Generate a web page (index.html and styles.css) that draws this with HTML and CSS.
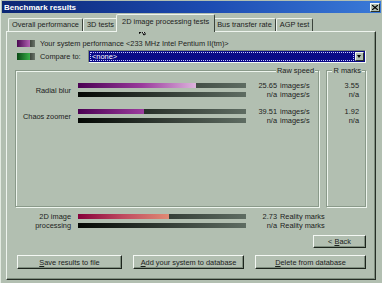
FILE: index.html
```html
<!DOCTYPE html>
<html lang="en">
<head>
  <meta charset="UTF-8" />
  <title>Benchmark results</title>
  <link rel="stylesheet" href="styles.css">
</head>
<body>
  <div class="window">
    <div class="titlebar">
      <span class="title">Benchmark results</span>
      <span class="close">
        <svg width="6" height="5" viewBox="0 0 6 5"><path d="M0 0 L6 5 M6 0 L0 5" stroke="#000" stroke-width="1.2"/></svg>
      </span>
    </div>

    <div class="tabs">
      <div class="tab">Overall performance</div>
      <div class="tab">3D tests</div>
      <div class="tab active">2D image processing tests</div>
      <div class="tab">Bus transfer rate</div>
      <div class="tab">AGP test</div>
    </div>

    <div class="panel">
      <div class="legend-row">
        <span class="swatch swatch-mine"></span>
        Your system performance &lt;233 MHz Intel Pentium II(tm)&gt;
      </div>
      <div class="legend-row">
        <span class="swatch swatch-compare"></span>
        <span class="compare-label">Compare to:</span>
        <div class="select">
          <span class="select-value">&lt;none&gt;</span>
          <span class="select-arrow"></span>
        </div>
      </div>

      <div class="groups">
        <fieldset class="group group-raw">
          <legend>Raw speed</legend>
          <div class="result">
            <div class="result-label">Radial blur</div>
            <div class="bar"><div class="fill fill-purple" style="width:70%"></div></div>
            <span class="num">25.65</span><span class="unit">images/s</span>
            <div class="bar"></div>
            <span class="num">n/a</span><span class="unit">images/s</span>
          </div>
          <div class="result">
            <div class="result-label">Chaos zoomer</div>
            <div class="bar"><div class="fill fill-purple" style="width:39%"></div></div>
            <span class="num">39.51</span><span class="unit">images/s</span>
            <div class="bar"></div>
            <span class="num">n/a</span><span class="unit">images/s</span>
          </div>
        </fieldset>
        <fieldset class="group group-marks">
          <legend>R marks</legend>
          <div class="marks"><span>3.55</span><span>n/a</span></div>
          <div class="marks"><span>1.92</span><span>n/a</span></div>
        </fieldset>
      </div>

      <div class="result result-total">
        <div class="result-label">2D image<br>processing</div>
        <div class="bar"><div class="fill fill-red" style="width:54%"></div></div>
        <span class="num">2.73</span><span class="unit">Reality marks</span>
        <div class="bar"></div>
        <span class="num">n/a</span><span class="unit">Reality marks</span>
      </div>

      <div class="back-row">
        <button class="btn btn-back">&lt; <u>B</u>ack</button>
      </div>

      <div class="button-row">
        <button class="btn btn-save"><u>S</u>ave results to file</button>
        <button class="btn btn-wide"><u>A</u>dd your system to database</button>
        <button class="btn btn-wide"><u>D</u>elete from database</button>
      </div>
    </div>

    <svg class="cursor" width="10" height="13" viewBox="0 0 10 13">
      <path d="M0.5 0.5 L0.5 10.5 L3 8.2 L4.8 12 L6.4 11.3 L4.7 7.6 L8 7.6 Z" fill="#fff" stroke="#000" stroke-width="1"/>
    </svg>
  </div>
</body>
</html>
```

FILE: styles.css
```css
* {
  box-sizing: border-box;
}

body {
  margin: 0;
  font-family: "Liberation Sans", Arial, sans-serif;
  font-size: 7.4px;
  color: #1c221c;
  background-color: #b2bfb1;
}

.window {
  position: relative;
  width: 382px;
  height: 283px;
  background-color: #b2bfb1;
  border-left: 1px solid #e2eae1;
  overflow: hidden;
}

.titlebar {
  height: 12px;
  margin: 1px 1px 0 1px;
  padding: 0 1px 0 2px;
  display: flex;
  align-items: center;
  justify-content: space-between;
  background: linear-gradient(90deg, #0b2674, #1d4cb2 55%, #3a7ad8);
}

.title {
  color: #fff;
  font-weight: bold;
  font-size: 8px;
}

.close {
  width: 10px;
  height: 9px;
  display: flex;
  align-items: center;
  justify-content: center;
  background-color: #b2bfb1;
  border: 1px solid;
  border-color: #f4f8f4 #2a322a #2a322a #f4f8f4;
}

/* tabs */
.tabs {
  height: 18px;
  padding-left: 7px;
  display: flex;
  align-items: flex-end;
}

.tab {
  height: 13px;
  padding: 0 3px;
  line-height: 12px;
  white-space: nowrap;
  border: 1px solid;
  border-bottom: none;
  border-color: #eef4ee #3c443c transparent #eef4ee;
  border-radius: 2px 2px 0 0;
}

.tab.active {
  position: relative;
  z-index: 1;
  height: 18px;
  margin: 0 -2px -1px;
  padding: 0 5px;
  line-height: 13px;
  background-color: #b2bfb1;
}

/* panel */
.panel {
  width: 370px;
  height: 249px;
  margin-left: 5px;
  padding: 5px 9px 0 10px;
  border: 1px solid;
  border-color: #eef4ee #262e26 #262e26 #eef4ee;
  box-shadow: inset -1px -1px 0 #7f8e7f;
}

.legend-row {
  display: flex;
  align-items: center;
  height: 12px;
  white-space: nowrap;
}

.legend-row + .legend-row {
  height: 15px;
}

.swatch {
  width: 18px;
  height: 7px;
  margin-right: 5px;
  flex: none;
}

.swatch-mine {
  background: linear-gradient(90deg, #4a0a52, #b262b2 72%, #3e463e 72%, #6a746a);
}

.swatch-compare {
  background: linear-gradient(90deg, #0a4a16, #38b048 72%, #3e463e 72%, #6a746a);
}

.compare-label {
  width: 48px;
}

.select {
  flex: 1;
  height: 13px;
  padding: 1px;
  display: flex;
  align-items: center;
  background-color: #0a0a86;
  border: 1px solid;
  border-color: #7a887a #f4f8f4 #f4f8f4 #7a887a;
}

.select-value {
  flex: 1;
  height: 9px;
  line-height: 8px;
  padding-left: 1px;
  color: #fff;
  border: 1px dotted #c8c8ff;
}

.select-arrow {
  position: relative;
  width: 9px;
  height: 9px;
  margin-left: 1px;
  background-color: #b2bfb1;
  border: 1px solid;
  border-color: #f4f8f4 #2a322a #2a322a #f4f8f4;
}

.select-arrow::after {
  content: "";
  position: absolute;
  left: 1px;
  top: 2px;
  border-left: 2.5px solid transparent;
  border-right: 2.5px solid transparent;
  border-top: 3px solid #000;
}

/* group boxes */
.groups {
  display: flex;
  gap: 7px;
  margin: 2px 0 0 -2px;
}

.group {
  margin: 0;
  padding: 6px 0 0;
  min-width: 0;
  height: 141px;
  border: 1px solid #8a9a8a;
  box-shadow: 1px 1px 0 #eef5ee, inset 1px 1px 0 #eef5ee;
}

.group legend {
  margin-left: auto;
  margin-right: 3px;
  padding: 0 1px;
  line-height: 9px;
  background-color: #b2bfb1;
}

.group-raw {
  flex: 1;
}

.group-marks {
  width: 40px;
  flex: none;
}

.result {
  display: grid;
  grid-template-columns: 62px 168px 31px auto;
  grid-template-rows: 9px 9px;
  align-items: center;
  margin-bottom: 8px;
  white-space: nowrap;
}

.result-label {
  grid-row: span 2;
  padding-right: 7px;
  text-align: right;
  line-height: 9px;
}

.bar {
  height: 5px;
  background: linear-gradient(90deg, #040804, #5e6c62);
}

.fill {
  height: 100%;
}

.fill-purple {
  background: linear-gradient(90deg, #4a0052, #9a3a9c 38%, #dcb2dc 70%, #f4e8f4) 0 0 / 168px 100%;
}

.fill-red {
  background: linear-gradient(90deg, #86003a, #c04a60 50%, #e08a74);
}

.num {
  text-align: right;
}

.unit {
  padding-left: 3px;
}

.marks {
  display: grid;
  grid-template-rows: 9px 9px;
  align-items: center;
  margin-bottom: 8px;
  padding-right: 6px;
  text-align: right;
}

.result-total {
  margin: 5px 0 0 -1px;
}

/* buttons */
.btn {
  height: 14px;
  padding: 0;
  font-family: inherit;
  font-size: 7.4px;
  color: #1c221c;
  background-color: #b2bfb1;
  border: 1px solid;
  border-color: #f4f8f4 #1c241c #1c241c #f4f8f4;
  box-shadow: inset -1px -1px 0 #7f8e7f;
}

.back-row {
  display: flex;
  justify-content: flex-end;
  margin-top: 5px;
}

.btn-back {
  width: 53px;
  height: 13px;
}

.button-row {
  display: flex;
  justify-content: space-between;
  margin-top: 7px;
}

.btn-save {
  width: 105px;
}

.btn-wide {
  width: 111px;
}

.cursor {
  position: absolute;
  left: 138px;
  top: 23px;
}
```
